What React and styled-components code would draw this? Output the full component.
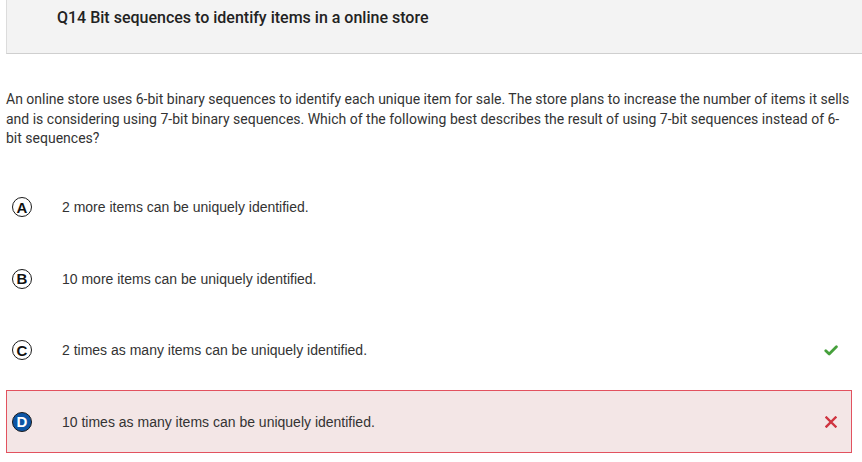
import React from 'react';
import styled, { createGlobalStyle } from 'styled-components';

const GlobalStyle = createGlobalStyle`
  html, body {
    margin: 0;
    padding: 0;
    background: #fff;
  }
  body {
    font-family: Roboto, "Liberation Sans", Arial, sans-serif;
  }
`;

const options = [
  { letter: 'A', text: '2 more items can be uniquely identified.' },
  { letter: 'B', text: '10 more items can be uniquely identified.' },
  { letter: 'C', text: '2 times as many items can be uniquely identified.', correct: true },
  { letter: 'D', text: '10 times as many items can be uniquely identified.', wrong: true },
];

const Check = () => (
  <svg width="14" height="11" viewBox="0 0 14 11">
    <path d="M1.8 5.8 L5.2 9 L12.4 1.8" fill="none" stroke="#46a03c" strokeWidth="2.8" strokeLinecap="round" strokeLinejoin="round" />
  </svg>
);

const Cross = () => (
  <svg width="12" height="12" viewBox="0 0 12 12">
    <path d="M1.5 1.5 L10.5 10.5 M10.5 1.5 L1.5 10.5" fill="none" stroke="#cf3440" strokeWidth="2.4" strokeLinecap="square" />
  </svg>
);

const App = () => {
  return (
    <Page>
      <GlobalStyle />
      <Header>
        <Title>Q14 Bit sequences to identify items in a online store</Title>
      </Header>
      <Question>
        An online store uses 6-bit binary sequences to identify each unique item for sale. The store plans to increase the number of items it sells and is considering using 7-bit binary sequences. Which of the following best describes the result of using 7-bit sequences instead of 6-bit sequences?
      </Question>
      <Options>
        {options.map(o => (
          <Option key={o.letter} wrong={o.wrong}>
            <Badge selected={o.wrong}>{o.letter}</Badge>
            <OptionText>{o.text}</OptionText>
            <Mark>
              {o.correct && <Check />}
              {o.wrong && <Cross />}
            </Mark>
          </Option>
        ))}
      </Options>
    </Page>
  );
};

export default App;

const Page = styled.div`
  padding-left: 6px;
  width: 862px;
  box-sizing: border-box;
`;

const Header = styled.div`
  height: 54px;
  box-sizing: border-box;
  background: #f3f3f3;
  border-left: 1px solid #dcdcdc;
  border-bottom: 1px solid #cfcfcf;
  padding: 7px 0 0 50px;
`;

const Title = styled.h2`
  margin: 0;
  font-family: Roboto, sans-serif;
  font-weight: 500;
  font-size: 16px;
  line-height: 22px;
  color: #222;
`;

const Question = styled.p`
  margin: 36px 0 0;
  padding-right: 8px;
  font-family: Roboto, sans-serif;
  font-size: 14px;
  line-height: 19.5px;
  color: #333;
`;

const Options = styled.div`
  display: flex;
  flex-direction: column;
  gap: 8.5px;
  margin-top: 27px;
  width: 846px;
`;

const Option = styled.div`
  display: flex;
  align-items: center;
  height: 63px;
  box-sizing: border-box;
  padding: 0 13px 0 5px;
  border: 1px solid ${p => (p.wrong ? '#e2525f' : 'transparent')};
  background: ${p => (p.wrong ? '#f3e6e6' : 'transparent')};
`;

const Badge = styled.span`
  width: 20px;
  height: 20px;
  box-sizing: border-box;
  border-radius: 50%;
  border: 1.5px solid #1a1a1a;
  background: ${p => (p.selected ? '#0d55a5' : '#fff')};
  color: ${p => (p.selected ? '#fff' : '#111')};
  display: flex;
  align-items: center;
  justify-content: center;
  font-family: "Liberation Sans", Arial, sans-serif;
  font-weight: 700;
  font-size: 15px;
  line-height: 1;
  flex-shrink: 0;
`;

const OptionText = styled.span`
  flex: 1;
  margin-left: 30px;
  font-family: "Liberation Sans", Arial, sans-serif;
  font-size: 14px;
  color: #333;
`;

const Mark = styled.span`
  width: 15px;
  display: flex;
  justify-content: center;
  align-items: center;
`;
